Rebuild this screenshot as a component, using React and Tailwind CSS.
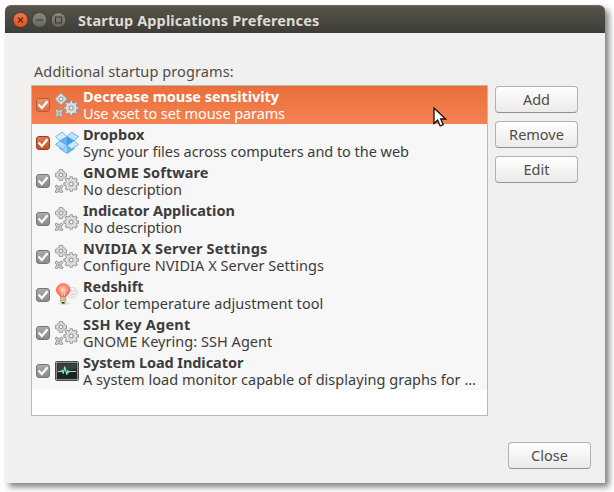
import React from "react";

function Gear({ cx, cy, r, reach, hole, teeth, tooth, rotate = 0 }) {
  const step = 360 / teeth;
  const items = Array.from({ length: teeth }, (_, i) => rotate + i * step);
  const shape = (grow, fill) => (
    <g fill={fill}>
      <circle r={r + grow} />
      {items.map((a) => (
        <rect
          key={a}
          x={-tooth / 2 - grow}
          y={-reach - grow}
          width={tooth + grow * 2}
          height={reach + grow}
          rx="0.8"
          transform={`rotate(${a})`}
        />
      ))}
    </g>
  );
  return (
    <g transform={`translate(${cx} ${cy})`}>
      {shape(0.45, "#989896")}
      {shape(-0.45, "#e2e2e0")}
      <circle r={hole + 1.2} fill="none" stroke="#bcbcba" strokeWidth="0.6" />
      <circle r={hole} fill="#f2f2f2" stroke="#8a8a88" strokeWidth="0.9" />
    </g>
  );
}

function GearsIcon() {
  return (
    <svg viewBox="0 0 24 24" className="size-6 shrink-0">
      <Gear cx={6} cy={6} r={4.5} reach={5.6} hole={1.8} teeth={4} tooth={3.2} />
      <Gear cx={4} cy={20} r={2.7} reach={4.6} hole={1} teeth={4} tooth={2.2} rotate={45} />
      <Gear cx={16.2} cy={15} r={5.7} reach={7.4} hole={1.9} teeth={8} tooth={2.5} />
    </svg>
  );
}

function DropboxIcon() {
  return (
    <svg viewBox="0 0 24 24" className="size-6 shrink-0" strokeLinejoin="round" strokeWidth="0.7" stroke="#4b98d8">
      <path d="M4.8 14.5 12 10l7.2 4.5v3.2L12 22.6l-7.2-4.9Z" fill="#9ad2f8" />
      <path d="M12 10.5v12l7.2-4.8v-3.5Z" fill="#62b4f0" stroke="none" />
      <path d="M4.9 9.7 12 5.7l7.1 4L12 14.3Z" fill="#63b2ef" />
      <path d="M12 5.7l7.1 4L12 14.3Z" fill="#3f9be6" stroke="none" />
      <path d="M7.3 1.2.5 5.6l4.4 4.1L12 5.7Z" fill="#d6edfd" />
      <path d="M16.7 1.2l6.8 4.4-4.4 4.1L12 5.7Z" fill="#bce1fb" />
      <path d="M.5 13.6l4.4-3.9 7.1 4.6-4.6 3.9Z" fill="#aedcfb" />
      <path d="M23.5 13.6l-4.4-3.9-7.1 4.6 4.6 3.9Z" fill="#cbe9fd" />
    </svg>
  );
}

function BulbIcon() {
  return (
    <svg viewBox="0 0 24 24" className="size-6 shrink-0">
      <defs>
        <radialGradient id="bulb" cx="50%" cy="42%" r="58%">
          <stop offset="0" stopColor="#ffc9b4" />
          <stop offset="0.6" stopColor="#ff8a6e" />
          <stop offset="1" stopColor="#f4573c" />
        </radialGradient>
      </defs>
      <circle cx="17" cy="9.5" r="5.4" fill="#f0f0ee" stroke="#d2d2d0" strokeWidth="0.8" />
      <path d="M16 6.5l1 2M20 7l-1.4 1.5M16 12.5l2-2 2 1.5" stroke="#c0c0be" strokeWidth="0.9" fill="none" />
      <ellipse cx="9.5" cy="20.5" rx="6" ry="1.3" fill="#e0e0de" />
      <path
        d="M8.2.6a6.8 6.5 0 0 0-6.8 6.3c0 4 3.600 4.800 4.400 7.300h4.800c.8-2.500 4.400-3.300 4.400-7.300A6.800 6.500 0 0 0 8.200.6Z"
        fill="url(#bulb)"
        stroke="#f2654b"
        strokeWidth="0.7"
      />
      <path d="M5.8 6l1.200 1.400L8.200 6l1.200 1.400L10.600 6M7 7.400v6M9.400 7.400v6" stroke="#ffe0d2" strokeWidth="0.8" fill="none" />
      <path d="M5.600 14h5.200v4.300l-1.200 1.500H6.800l-1.200-1.500Z" fill="#e0d998" stroke="#9a9460" strokeWidth="0.6" />
      <path d="M5.600 15.700h5.200M5.600 17.500h5.200" stroke="#a39d68" strokeWidth="0.6" />
      <path d="M6.800 19h2.800v1.600H6.800Z" fill="#37372f" />
    </svg>
  );
}

function MonitorIcon() {
  return (
    <svg viewBox="0 0 24 24" className="size-6 shrink-0">
      <rect x="0.5" y="2.5" width="23" height="19" rx="1.2" fill="#c9c9c7" stroke="#4b4b4b" />
      <rect x="2" y="4" width="20" height="16" fill="#1d2324" stroke="#2f3434" strokeWidth="0.8" />
      <path d="M2.5 4.5h19v5l-19 5Z" fill="#39403f" />
      <path
        d="M3 12.500h3.300l1-1.500 1 3.500L9.800 7.800l2 7.700 1-4 .9 2 .8-1H21"
        fill="none"
        stroke="#7ff0cc"
        strokeWidth="1.1"
        strokeLinejoin="round"
      />
    </svg>
  );
}

const ICONS = { gears: GearsIcon, dropbox: DropboxIcon, bulb: BulbIcon, monitor: MonitorIcon };

const PROGRAMS = [
  { name: "Decrease mouse sensitivity", nt: "tracking-[-0.04px]", text: "Use xset to set mouse params", tt: "tracking-[-0.1px]", icon: "gears", box: "selected" },
  { name: "Dropbox", nt: "", text: "Sync your files across computers and to the web", tt: "tracking-[-0.045px]", icon: "dropbox", box: "orange" },
  { name: "GNOME Software", nt: "tracking-[0.1px]", text: "No description", tt: "tracking-[-0.07px]", icon: "gears", box: "grey" },
  { name: "Indicator Application", nt: "tracking-[-0.04px]", text: "No description", tt: "tracking-[-0.07px]", icon: "gears", box: "grey" },
  { name: "NVIDIA X Server Settings", nt: "tracking-[0.18px]", text: "Configure NVIDIA X Server Settings", tt: "tracking-[0.05px]", icon: "gears", box: "grey" },
  { name: "Redshift", nt: "tracking-[0.05px]", text: "Color temperature adjustment tool", tt: "tracking-[0.07px]", icon: "bulb", box: "grey" },
  { name: "SSH Key Agent", nt: "tracking-[0.23px]", text: "GNOME Keyring: SSH Agent", tt: "tracking-[0.04px]", icon: "gears", box: "grey" },
  { name: "System Load Indicator", nt: "tracking-[-0.07px]", text: "A system load monitor capable of displaying graphs for …", tt: "tracking-[0.035px]", icon: "monitor", box: "grey" },
];

const BOXES = {
  selected: "border-[#b9593a] from-[#ee8f6c] to-[#dc6a42]",
  orange: "border-[#8e4023] from-[#e57b4f] to-[#c64f22]",
  grey: "border-[#757573] from-[#ababab] to-[#8b8b8b]",
};

function CheckBox({ kind }) {
  return (
    <span className={`flex size-[14px] shrink-0 items-center justify-center rounded-[3px] border bg-linear-to-b ${BOXES[kind]}`}>
      <svg viewBox="0 0 12 12" className="size-3 shrink-0">
        <path d="M1.6 5.6l3.2 3.5 5.7-6.9" fill="none" stroke="#fff" strokeWidth="2.2" />
      </svg>
    </span>
  );
}

function ProgramRow({ program, selected }) {
  const Icon = ICONS[program.icon];
  return (
    <li
      className={`flex h-[38px] items-center pl-1 ${
        selected ? "bg-linear-to-b from-[#e96f3b] to-[#f58151] text-white" : "bg-[#f7f7f7] text-[#3c3c3c]"
      }`}
    >
      <CheckBox kind={program.box} />
      <span className="ml-[5px] flex">
        <Icon />
      </span>
      <div className="ml-1 text-[14.5px] leading-[17px] whitespace-nowrap">
        <div className={`w-fit font-bold ${program.nt}`}>{program.name}</div>
        <div className={`w-fit ${program.tt}`}>{program.text}</div>
      </div>
    </li>
  );
}

function Button({ children }) {
  return (
    <button className="flex h-[27px] w-[83px] items-center justify-center rounded-[4px] border border-[#b3b1ae] border-b-[#94928f] bg-linear-to-b from-white to-[#ebeae8] text-[14.5px] leading-[19px] text-[#4c4c4c]">
      {children}
    </button>
  );
}

function TitleBar() {
  return (
    <header className="flex h-7 items-center rounded-t-[6px] border-t border-[#6b6961] bg-linear-to-b from-[#575549] to-[#3d3c38] pl-2">
      <svg viewBox="0 0 54 16" className="h-4 w-[54px]" fill="none">
        <defs>
          <linearGradient id="close" x2="0" y2="1">
            <stop stopColor="#f4794e" />
            <stop offset="1" stopColor="#e2511f" />
          </linearGradient>
          <linearGradient id="plain" x2="0" y2="1">
            <stop stopColor="#8b8980" />
            <stop offset="1" stopColor="#65645d" />
          </linearGradient>
        </defs>
        <circle cx="7.5" cy="8" r="7.5" fill="url(#close)" stroke="#373632" strokeWidth="0.8" />
        <circle cx="26.5" cy="8" r="7.5" fill="url(#plain)" stroke="#373632" strokeWidth="0.8" />
        <circle cx="45.5" cy="8" r="7.5" fill="url(#plain)" stroke="#373632" strokeWidth="0.8" />
        <path d="M5 5.5l5 5M10 5.5l-5 5" stroke="#5e2a1a" strokeWidth="1.4" />
        <path d="M23 8h7" stroke="#3a3935" strokeWidth="1.1" />
        <path d="M42.500 5h6v6h-6Z" stroke="#3a3935" strokeWidth="1.1" />
      </svg>
      <h1 className="ml-[11px] text-[14.5px] leading-5 font-bold tracking-[0.13px] whitespace-nowrap text-[#dfdbd2]">
        Startup Applications Preferences
      </h1>
    </header>
  );
}

function Pointer() {
  return (
    <svg viewBox="0 0 14 21" className="absolute top-[21px] left-[401px] h-[21px] w-[14px]">
      <path d="M1 1v15.5l3.6-3.3 2.6 5.8 3-1.3-2.5-5.7h4.9Z" fill="#fff" stroke="#111" strokeWidth="1.3" />
    </svg>
  );
}

export default function App() {
  return (
    <div className="h-[492px] w-[614px] bg-white pt-[5px] pl-[5px] font-['Noto_Sans','Open_Sans',sans-serif]">
      <main className="flex h-[478px] w-[600px] flex-col rounded-t-[6px] bg-[#f1f0ee] shadow-[4px_4px_6px_0px_rgba(0,0,0,0.5)]">
        <TitleBar />
        <section className="flex flex-1 flex-col pt-[28px] pr-[14px] pb-[14px] pl-[26px]">
          <p className="ml-[3px] h-6 w-fit text-[14.5px] leading-5 tracking-[0.1px] whitespace-nowrap text-[#4c4c4c]">
            Additional startup programs:
          </p>
          <div className="flex items-start gap-[7px]">
            <div className="relative h-[331px] w-[457px] border border-[#bab8b4] bg-white">
              <ul>
                {PROGRAMS.map((program, i) => (
                  <ProgramRow key={program.name} program={program} selected={i === 0} />
                ))}
              </ul>
              <Pointer />
            </div>
            <div className="mt-px flex flex-col gap-2">
              <Button>Add</Button>
              <Button>Remove</Button>
              <Button>Edit</Button>
            </div>
          </div>
          <div className="mt-auto flex justify-end">
            <Button>Close</Button>
          </div>
        </section>
      </main>
    </div>
  );
}
